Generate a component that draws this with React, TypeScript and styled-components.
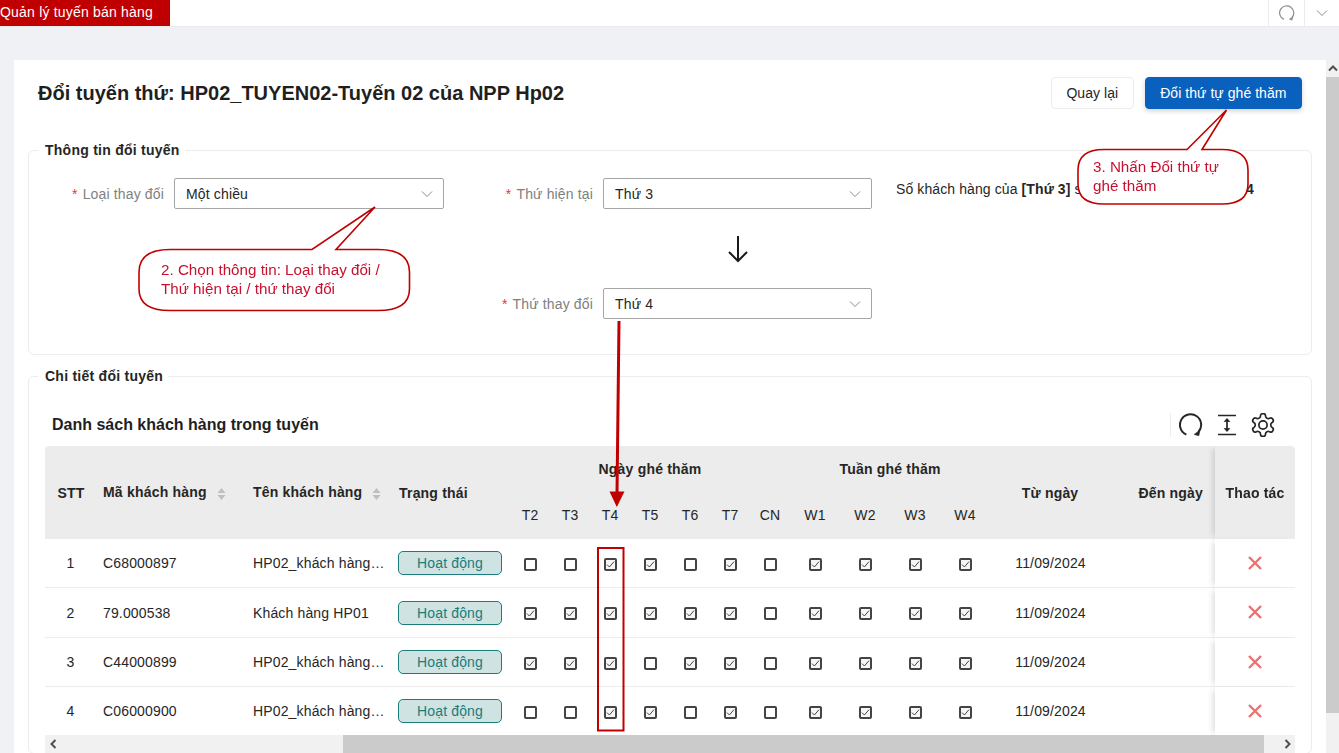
import React from "react";
import styled, { createGlobalStyle } from "styled-components";

const Global = createGlobalStyle`
  html, body { margin: 0; padding: 0; height: 100%; overflow: hidden; }
  body { font-family: "Liberation Sans", Arial, sans-serif; font-size: 14px; color: #262626; background: #f0f1f5; }
  * { box-sizing: border-box; }
`;

const Page = styled.div`
  position: relative;
  width: 1339px;
  height: 753px;
  overflow: hidden;
  display: flex;
  flex-direction: column;
  background: #f0f1f5;
`;
const TopBar = styled.header`
  flex: 0 0 27px;
  display: flex;
  justify-content: space-between;
  background: #fff;
  border-bottom: 1px solid #ebebeb;
`;
const ActiveTab = styled.div`
  width: 170px;
  height: 26px;
  background: #c00000;
  color: #fff;
  font-size: 14px;
  line-height: 25px;
  letter-spacing: 0.2px;
  white-space: nowrap;
`;
const TopActions = styled.div`
  display: flex;
`;
const TopAction = styled.div`
  width: 36px;
  height: 26px;
  border-left: 1px solid #ebebeb;
  display: flex;
  align-items: center;
  justify-content: center;
  color: #8c8c8c;
  &:last-child { width: 35px; }
`;
const Card = styled.main`
  margin: 33px 0 0 14px;
  flex: 1;
  min-height: 0;
  display: flex;
  background: #fff;
`;
const Content = styled.div`
  flex: 1;
  min-width: 0;
  overflow: hidden;
  padding: 17px 14px 0;
`;
const VScroll = styled.div`
  flex: 0 0 13px;
  background: #f1f1f1;
  display: flex;
  flex-direction: column;
`;
const VArrow = styled.div`
  height: 17px;
  display: flex;
  align-items: center;
  justify-content: center;
  color: #505050;
`;
const VThumb = styled.div`
  height: 636px;
  background: #cbcbcb;
`;
const TitleRow = styled.div`
  display: flex;
  align-items: center;
  justify-content: space-between;
  height: 32px;
  padding: 0 10px;
`;
const Title = styled.h1`
  margin: 0;
  font-size: 20px;
  line-height: 32px;
  font-weight: 700;
  color: #1f1f1f;
`;
const Buttons = styled.div`
  display: flex;
  gap: 11px;
`;
const Button = styled.button<{ $primary?: boolean }>`
  height: 32px;
  padding: 0 14.5px;
  font: inherit;
  font-size: 14px;
  letter-spacing: 0.05px;
  border-radius: 4px;
  border: 1px solid ${(p) => (p.$primary ? "#0a60bd" : "#ececec")};
  background: ${(p) => (p.$primary ? "#0a60bd" : "#fff")};
  color: ${(p) => (p.$primary ? "#fff" : "#262626")};
  box-shadow: ${(p) => (p.$primary ? "0 2px 5px rgba(0,0,0,.18)" : "none")};
`;
const Section = styled.fieldset<{ $top: number }>`
  margin: ${(p) => p.$top}px 0 0;
  padding: 0 16px;
  border: 1px solid #ececec;
  border-radius: 6px;
  min-width: 0;
`;
const Legend = styled.legend`
  margin-left: -7px;
  padding: 0 5px 0 7px;
  font-size: 14px;
  line-height: 16px;
  font-weight: 700;
  letter-spacing: 0.25px;
  color: #262626;
`;
const FormGrid = styled.div`
  display: grid;
  grid-template-columns: 129px 270px 159px 269px 1fr;
  grid-template-rows: 31px 79px 31px;
  margin-top: 20px;
  padding-bottom: 35px;
`;
const FieldLabel = styled.label`
  display: flex;
  align-items: center;
  justify-content: flex-end;
  padding-right: 10px;
  color: #808080;
  letter-spacing: 0.15px;
  white-space: nowrap;
`;
const LowerLabel = styled(FieldLabel)`
  grid-column: 3;
  grid-row: 3;
`;
const Req = styled.span`
  color: #e03a3a;
  margin-right: 5px;
`;
const SelectBox = styled.div`
  display: flex;
  align-items: center;
  justify-content: space-between;
  height: 31px;
  padding: 0 10px 0 11px;
  border: 1px solid #a6a6a6;
  border-radius: 2px;
  color: #262626;
  letter-spacing: 0.15px;
`;
const LowerSelect = styled(SelectBox)`
  grid-column: 4;
  grid-row: 3;
`;
const Info = styled.div`
  padding: 3px 0 0 24px;
  white-space: nowrap;
  letter-spacing: 0.1px;
  color: #262626;
`;
const ArrowCell = styled.div`
  grid-column: 4;
  grid-row: 2;
  display: flex;
  align-items: center;
  justify-content: center;
`;
const Toolbar = styled.div`
  display: flex;
  align-items: center;
  justify-content: space-between;
  height: 43px;
  margin-top: 19px;
  padding: 0 20px 0 7px;
`;
const ListTitle = styled.h2`
  margin: 0;
  font-size: 16px;
  font-weight: 700;
  color: #1f1f1f;
`;
const ToolIcons = styled.div`
  display: flex;
  align-items: center;
  gap: 12px;
  height: 24px;
  padding-left: 8px;
  border-left: 1px solid #ececec;
  color: #262626;
`;
const TableWrap = styled.div`
  height: 289px;
  overflow: hidden;
  border-radius: 4px 4px 0 0;
`;
const Table = styled.table`
  width: 1250px;
  table-layout: fixed;
  border-collapse: separate;
  border-spacing: 0;
`;
const Th = styled.th<{ $align?: string; $pad?: number; $sub?: boolean }>`
  height: ${(p) => (p.$sub ? 47 : 46)}px;
  background: #ececec;
  text-align: ${(p) => p.$align ?? "center"};
  padding: 0 ${(p) => (p.$align === "right" ? p.$pad ?? 0 : 0)}px ${(p) => (p.$sub ? 2 : 0)}px ${(p) => (p.$align === "left" ? p.$pad ?? 0 : 0)}px;
  font-weight: ${(p) => (p.$sub ? 400 : 700)};
  letter-spacing: 0.2px;
  color: #262626;
  white-space: nowrap;
`;
const StickyTh = styled(Th)`
  position: sticky;
  right: 0;
  box-shadow: -5px 0 6px -3px rgba(0, 0, 0, 0.14);
`;
const Tr = styled.tr<{ $h: number }>`
  height: ${(p) => p.$h}px;
`;
const Td = styled.td<{ $align?: string; $pad?: number }>`
  border-bottom: 1px solid #ececec;
  text-align: ${(p) => p.$align ?? "center"};
  padding: 0 5px 0 ${(p) => p.$pad ?? 6}px;
  letter-spacing: 0.15px;
  color: #262626;
  white-space: nowrap;
  overflow: hidden;
  text-overflow: ellipsis;
`;
const CheckTd = styled.td`
  border-bottom: 1px solid #ececec;
  text-align: center;
  padding: 0;
`;
const BadgeTd = styled(CheckTd)`
  text-align: left;
`;
const StickyTd = styled(CheckTd)`
  position: sticky;
  right: 0;
  background: #fff;
  box-shadow: -5px 0 6px -3px rgba(0, 0, 0, 0.14);
`;
const Badge = styled.div`
  width: 104px;
  height: 24px;
  margin-left: 6px;
  line-height: 22px;
  text-align: center;
  background: #cfe3e2;
  border: 1px solid #1b7c7c;
  border-radius: 5px;
  color: #1b7c7c;
  letter-spacing: 0.15px;
`;
const Check = styled.span<{ $on: boolean }>`
  display: inline-flex;
  width: 13px;
  height: 13px;
  vertical-align: middle;
  align-items: center;
  justify-content: center;
  border: 2px solid #444;
  border-radius: 2px;
  background: ${(p) => (p.$on ? "#f6f6f6" : "#fff")};
  color: #444;
`;
const SortMark = styled.span`
  display: inline-flex;
  vertical-align: middle;
  margin-left: 10px;
  color: #bfbfbf;
`;
const HScroll = styled.div`
  display: flex;
  align-items: center;
  height: 18px;
  background: #f1f1f1;
`;
const HArrow = styled.div`
  flex: 0 0 17px;
  display: flex;
  justify-content: center;
  color: #505050;
`;
const HThumbGap = styled.div`
  flex: 0 0 281px;
`;
const HThumb = styled.div`
  flex: 0 0 921px;
  height: 18px;
  background: #cbcbcb;
`;
const HEnd = styled.div`
  flex: 1;
  display: flex;
  justify-content: flex-end;
  padding-right: 3px;
  color: #505050;
`;
const Overlay = styled.svg`
  position: absolute;
  left: 0;
  top: 0;
  pointer-events: none;
`;
const CalloutText = styled.div<{ $x: number; $y: number }>`
  position: absolute;
  left: ${(p) => p.$x}px;
  top: ${(p) => p.$y}px;
  color: #c8102e;
  font-size: 15.2px;
  line-height: 18.5px;
  white-space: pre;
`;
const CrossIcon = styled.svg`
  display: inline-block;
  vertical-align: middle;
  margin-bottom: 1px;
`;

const Chevron = () => (
  <svg width="12" height="12" viewBox="0 0 12 12" fill="none" stroke="#8c8c8c" strokeWidth="1">
    <path d="M1 3.5 L6 8.5 L11 3.5" />
  </svg>
);
const Sort = () => (
  <SortMark>
    <svg width="9" height="14" viewBox="0 0 9 14" fill="currentColor">
      <path d="M4.5 1 L8.5 6 H0.5 Z M0.5 8 H8.5 L4.5 13 Z" />
    </svg>
  </SortMark>
);
const Reload = ({ size, width }: { size: number; width: number }) => (
  <svg width={size} height={size} viewBox="0 0 24 24" fill="none" stroke="currentColor" strokeWidth={width}>
    <path d="M7.4 21.6 A10.6 10.6 0 1 1 19.4 19" />
    <path d="M21 17 L19.8 22.8 L15.2 21.4 Z" fill="currentColor" strokeWidth="0.6" />
  </svg>
);
const ColHeight = () => (
  <svg width="24" height="24" viewBox="0 0 24 24" fill="none" stroke="currentColor">
    <path d="M3 2.5 H21 M3 21.5 H21" strokeWidth="1.7" />
    <path d="M12 6 V18" strokeWidth="1.7" />
    <path d="M9.3 8.5 L12 5.5 L14.7 8.5 Z M9.3 15.5 L12 18.5 L14.7 15.5 Z" fill="currentColor" strokeWidth="0.8" />
  </svg>
);
const Gear = () => (
  <svg width="24" height="24" viewBox="1.5 1.5 21 21" fill="none" stroke="currentColor" strokeWidth="1.5" strokeLinejoin="round">
    <path d="M12.2 2h-.4a2 2 0 0 0-2 2v.2a2 2 0 0 1-1 1.7l-.4.3a2 2 0 0 1-2 0l-.2-.1a2 2 0 0 0-2.7.7l-.2.4a2 2 0 0 0 .7 2.7l.2.1a2 2 0 0 1 1 1.7v.6a2 2 0 0 1-1 1.7l-.2.1a2 2 0 0 0-.7 2.7l.2.4a2 2 0 0 0 2.7.7l.2-.1a2 2 0 0 1 2 0l.4.3a2 2 0 0 1 1 1.7v.2a2 2 0 0 0 2 2h.4a2 2 0 0 0 2-2v-.2a2 2 0 0 1 1-1.7l.4-.3a2 2 0 0 1 2 0l.2.1a2 2 0 0 0 2.7-.7l.2-.4a2 2 0 0 0-.7-2.7l-.2-.1a2 2 0 0 1-1-1.7v-.6a2 2 0 0 1 1-1.7l.2-.1a2 2 0 0 0 .7-2.7l-.2-.4a2 2 0 0 0-2.7-.7l-.2.1a2 2 0 0 1-2 0l-.4-.3a2 2 0 0 1-1-1.7V4a2 2 0 0 0-2-2z" />
    <circle cx="12" cy="12" r="3.6" />
  </svg>
);
const Tick = () => (
  <svg width="9" height="9" viewBox="0 0 9 9" fill="none" stroke="currentColor" strokeWidth="1">
    <path d="M1 4.6 L3.4 7 L8 1.6" />
  </svg>
);
const Cross = () => (
  <CrossIcon width="16" height="16" viewBox="0 0 16 16" fill="none" stroke="#ee7070" strokeWidth="2.4">
    <path d="M2 2 L14 14 M14 2 L2 14" />
  </CrossIcon>
);
const Caret = ({ dir }: { dir: "up" | "left" | "right" }) => {
  const d = { up: "M1 6.5 L5 2.5 L9 6.5", left: "M6.5 1 L2.5 5 L6.5 9", right: "M3.5 1 L7.5 5 L3.5 9" }[dir];
  return (
    <svg width="10" height="10" viewBox="0 0 10 10" fill="none" stroke="currentColor" strokeWidth="2">
      <path d={d} />
    </svg>
  );
};

const days = ["T2", "T3", "T4", "T5", "T6", "T7", "CN"];
const weeks = ["W1", "W2", "W3", "W4"];
const rows = [
  { no: 1, code: "C68000897", name: "HP02_khách hàng 01 của tuyến", d: [0, 0, 1, 1, 0, 1, 0], h: 49 },
  { no: 2, code: "79.000538", name: "Khách hàng HP01", d: [1, 1, 1, 1, 1, 1, 0], h: 50 },
  { no: 3, code: "C44000899", name: "HP02_khách hàng 03 của tuyến", d: [1, 1, 1, 0, 1, 1, 0], h: 49 },
  { no: 4, code: "C06000900", name: "HP02_khách hàng 04 của tuyến", d: [0, 0, 1, 1, 0, 1, 0], h: 49 },
];
const colWidths = [52, 150, 145, 118, 40, 40, 40, 40, 40, 40, 40, 50, 50, 50, 50, 120, 105, 80];

export default function App() {
  return (
    <Page>
      <Global />
      <TopBar>
        <ActiveTab>Quản lý tuyến bán hàng</ActiveTab>
        <TopActions>
          <TopAction><Reload size={16} width={1.8} /></TopAction>
          <TopAction><Chevron /></TopAction>
        </TopActions>
      </TopBar>
      <Card>
        <Content>
          <TitleRow>
            <Title>Đổi tuyến thứ: HP02_TUYEN02-Tuyến 02 của NPP Hp02</Title>
            <Buttons>
              <Button>Quay lại</Button>
              <Button $primary>Đổi thứ tự ghé thăm</Button>
            </Buttons>
          </TitleRow>
          <Section $top={33}>
            <Legend>Thông tin đổi tuyến</Legend>
            <FormGrid>
              <FieldLabel><Req>*</Req>Loại thay đổi</FieldLabel>
              <SelectBox>Một chiều<Chevron /></SelectBox>
              <FieldLabel><Req>*</Req>Thứ hiện tại</FieldLabel>
              <SelectBox>Thứ 3<Chevron /></SelectBox>
              <Info>Số khách hàng của <b>[Thứ 3]</b> sẽ chuyển sang <b>[Thứ 4]</b> là <b>4</b></Info>
              <ArrowCell>
                <svg width="24" height="28" viewBox="0 0 24 28" fill="none" stroke="#1a1a1a" strokeWidth="2">
                  <path d="M12 1 V26 M3 17 L12 26 L21 17" />
                </svg>
              </ArrowCell>
              <LowerLabel><Req>*</Req>Thứ thay đổi</LowerLabel>
              <LowerSelect>Thứ 4<Chevron /></LowerSelect>
            </FormGrid>
          </Section>
          <Section $top={13}>
            <Legend>Chi tiết đổi tuyến</Legend>
            <Toolbar>
              <ListTitle>Danh sách khách hàng trong tuyến</ListTitle>
              <ToolIcons>
                <Reload size={24} width={2} />
                <ColHeight />
                <Gear />
              </ToolIcons>
            </Toolbar>
            <TableWrap>
              <Table>
                <colgroup>
                  {colWidths.map((w, i) => <col key={i} width={w} />)}
                </colgroup>
                <thead>
                  <tr>
                    <Th rowSpan={2}>STT</Th>
                    <Th rowSpan={2} $align="left" $pad={6}>Mã khách hàng<Sort /></Th>
                    <Th rowSpan={2} $align="left" $pad={6}>Tên khách hàng<Sort /></Th>
                    <Th rowSpan={2} $align="left" $pad={7}>Trạng thái</Th>
                    <Th colSpan={7}>Ngày ghé thăm</Th>
                    <Th colSpan={4}>Tuần ghé thăm</Th>
                    <Th rowSpan={2}>Từ ngày</Th>
                    <Th rowSpan={2} $align="right" $pad={12}>Đến ngày</Th>
                    <StickyTh rowSpan={2}>Thao tác</StickyTh>
                  </tr>
                  <tr>
                    {[...days, ...weeks].map((h) => <Th key={h} $sub>{h}</Th>)}
                  </tr>
                </thead>
                <tbody>
                  {rows.map((r) => (
                    <Tr key={r.no} $h={r.h}>
                      <Td $align="center" $pad={4}>{r.no}</Td>
                      <Td $align="left" $pad={6}>{r.code}</Td>
                      <Td $align="left" $pad={6}>{r.name}</Td>
                      <BadgeTd><Badge>Hoạt động</Badge></BadgeTd>
                      {r.d.map((v, i) => (
                        <CheckTd key={i}><Check $on={!!v}>{v ? <Tick /> : null}</Check></CheckTd>
                      ))}
                      {weeks.map((w) => (
                        <CheckTd key={w}><Check $on><Tick /></Check></CheckTd>
                      ))}
                      <Td>11/09/2024</Td>
                      <Td />
                      <StickyTd><Cross /></StickyTd>
                    </Tr>
                  ))}
                </tbody>
              </Table>
            </TableWrap>
            <HScroll>
              <HArrow><Caret dir="left" /></HArrow>
              <HThumbGap />
              <HThumb />
              <HEnd><Caret dir="right" /></HEnd>
            </HScroll>
          </Section>
        </Content>
        <VScroll>
          <VArrow><Caret dir="up" /></VArrow>
          <VThumb />
        </VScroll>
      </Card>

      <Overlay width="1339" height="753" viewBox="0 0 1339 753">
        <path
          d="M1226.5 110 L1202 149.5 H1222 Q1248 149.5 1248 170 V184 Q1248 204 1222 204 H1104 Q1078 204 1078 184 V170 Q1078 149.5 1104 149.5 H1187 Z"
          fill="#fff" stroke="#c00000" strokeWidth="1.6"
        />
        <path
          d="M375 207 L336 249.5 H378 Q409.5 249.5 409.5 272 V289 Q409.5 310.5 378 310.5 H170 Q139 310.5 139 289 V272 Q139 249.5 170 249.5 H312 Z"
          fill="#fff" stroke="#c00000" strokeWidth="1.6"
        />
        <path d="M619 321 L617 494" stroke="#c00000" strokeWidth="3" fill="none" />
        <path d="M609.5 491.5 H624.5 L616.8 507 Z" fill="#c00000" />
        <rect x="598" y="548" width="25.5" height="182.5" fill="none" stroke="#c00000" strokeWidth="2" />
      </Overlay>
      <CalloutText $x={1093} $y={158}>{"3. Nhấn Đổi thứ tự\nghé thăm"}</CalloutText>
      <CalloutText $x={161} $y={261}>{"2. Chọn thông tin: Loại thay đổi /\nThứ hiện tại / thứ thay đổi"}</CalloutText>
    </Page>
  );
}
